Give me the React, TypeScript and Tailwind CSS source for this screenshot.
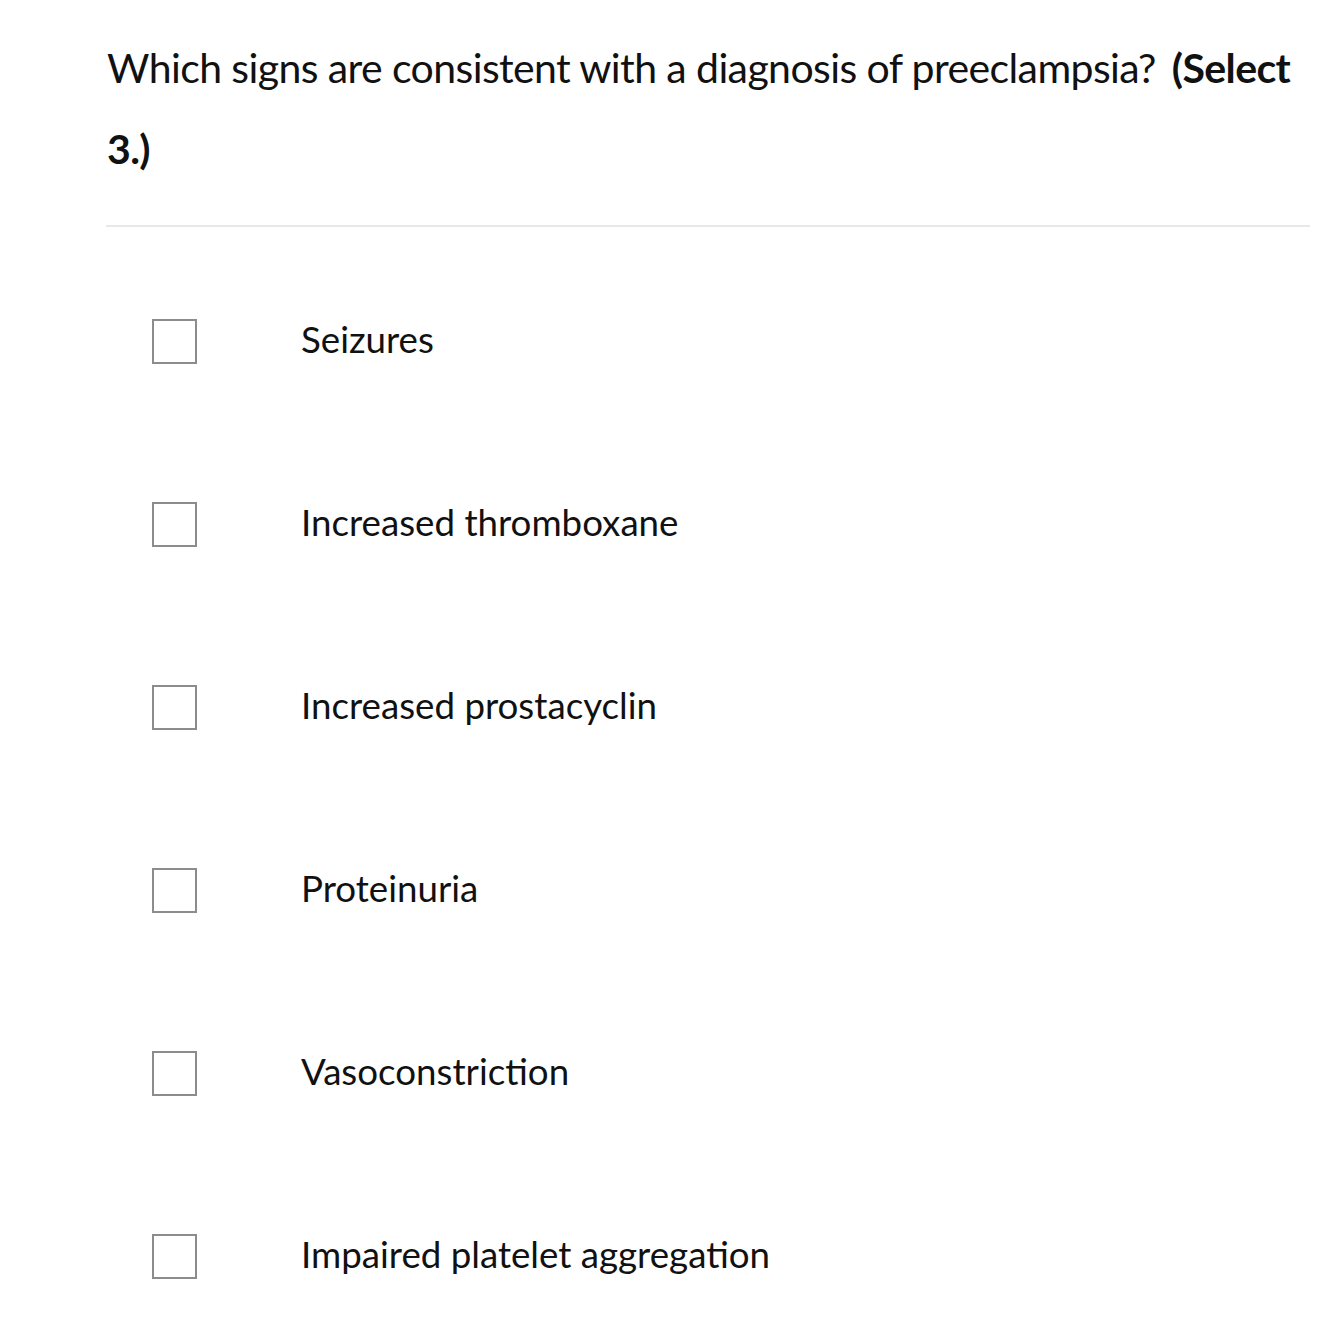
const OPTIONS = [
    'Seizures',
    'Increased thromboxane',
    'Increased prostacyclin',
    'Proteinuria',
    'Vasoconstriction',
    'Impaired platelet aggregation',
];

export default function App() {
    return (
        <div className="min-h-[1334px] bg-white text-[#111] font-['Lato',sans-serif]">
            <div className="pl-[107px] pr-[24px] pt-[27px]">
                <h1 className="text-[41px] leading-[81px] font-normal tracking-[-0.6px]">
                    Which signs are consistent with a diagnosis of preeclampsia?{' '}
                    <strong className="font-bold ml-[6px]">(Select 3.)</strong>
                </h1>
                <div className="mt-[36px] h-[2px] bg-[#e8e8e8] -ml-px" />
                <ul className="mt-[23px]">
                    {OPTIONS.map((opt) => (
                        <li key={opt} className="flex items-center h-[183px]">
                            <span className="ml-[45px] w-[45px] h-[45px] border-2 border-[#8c8c8c] bg-white shrink-0" />
                            <span className="ml-[104px] pb-[4px] text-[36.7px] leading-none">{opt}</span>
                        </li>
                    ))}
                </ul>
            </div>
        </div>
    );
}
